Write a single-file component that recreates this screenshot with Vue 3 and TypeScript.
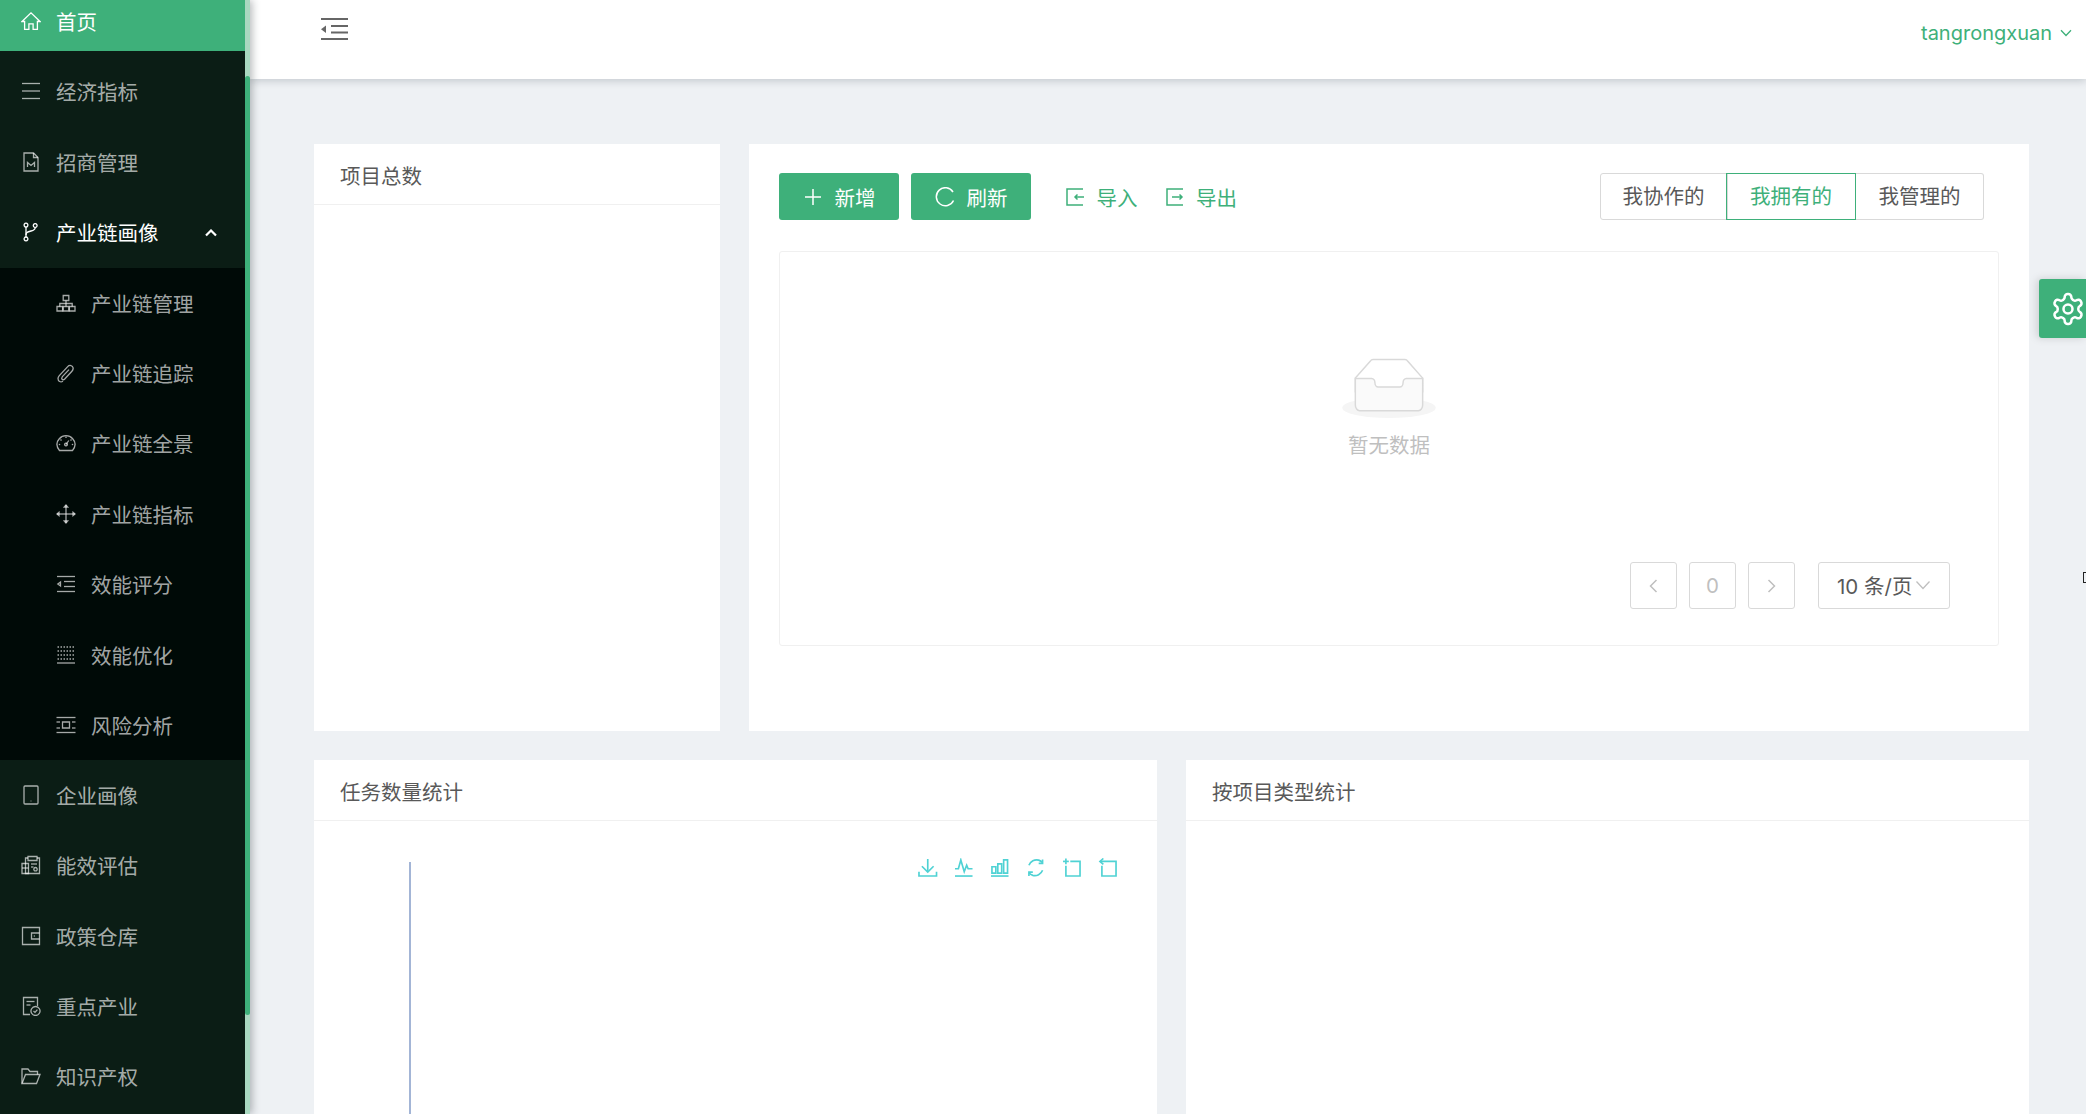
<script setup lang="ts">
type Icon = string[]

const icons: Record<string, Icon> = {
  home: ['M1 10.5 10 1.8l9 8.7h-2.6v7.8h-4.3v-5.4H7.9v5.4H3.6v-7.8z'],
  bars: ['M1 2.5h18', 'M1 10h18', 'M1 17.5h18'],
  file: ['M3 1h9.5L17 5.5V19H3z', 'M12.5 1v4.5H17', 'M6.5 15v-4.6l3.5 3 3.500-3V15'],
  branch: [
    'M5 5v10',
    'M5 13c0-2.6 1.4-3 5-4 3-.8 4.2-1.5 4.2-3.6',
    'M5 1.2a1.9 1.9 0 1 1-.01 0z',
    'M5 15a1.9 1.9 0 1 1-.01 0z',
    'M14.2 1.6a1.9 1.9 0 1 1-.01 0z',
  ],
  apartment: [
    'M7.2 2.5h5.600v5H7.200z',
    'M1 13.5h5.600v4.500H1z',
    'M7.2 13.5h5.600v4.500H7.200z',
    'M13.4 13.5H19V18h-5.600z',
    'M3.800 13.500V10.500h12.400v3',
    'M10 7.500v6',
  ],
  clip: [
    'M7 18.2c-2.4 1.4-5 .2-5-2.6 0-1 .5-2.1 1.3-3l8.4-9c1.700-1.900 5-1.300 5.400 1.200.2 1.200-.3 2.400-1.200 3.400l-7.400 8c-1.200 1.200-3.100.3-2.700-1.300.1-.5.4-1 .8-1.500l6.400-6.800',
  ],
  dashboard: [
    'M3.5 17.500h13c3.600-4.400 2.800-8.900.2-11.800C13.200 1.700 6.800 1.700 3.300 5.700.7 8.600-.1 13.100 3.500 17.500z',
    'M10 11.500l2.800-4',
    'M10 12.900a1.400 1.400 0 1 0-.01 0z',
    'M10 3.500v1.500',
    'M4.500 6.500l1 1',
    'M15.500 6.500l-1 1',
    'M2.800 11.500h1.400',
    'M15.800 11.500h1.400',
  ],
  drag: [
    'M10 1v18',
    'M1 10h18',
    'M8.300 3 10 1l1.700 2z',
    'M8.300 17 10 19l1.700-2z',
    'M3 8.300 1 10l2 1.700z',
    'M17 8.300 19 10l-2 1.700z',
  ],
  indent: ['M1 2.500h18', 'M8 7.500h11', 'M8 12.500h11', 'M1 17.500h18', 'M4.500 8v4L1.800 10z'],
  dotted: [
    'M1.500 2h17',
    'M1.500 6h17',
    'M1.500 10h17',
    'M1.500 14h17',
  ],
  pic: ['M0.500 2.500h19', 'M0.500 17.500h19', 'M0.500 7h3.500', 'M0.500 13h3.500', 'M16 7h3.500', 'M16 13h3.500', 'M6.500 7h7v6h-7z'],
  tablet: ['M4 1h12c.6 0 1 .4 1 1v16c0 .6-.4 1-1 1H4c-.6 0-1-.4-1-1V2c0-.6.4-1 1-1z', 'M9.700 16h.6'],
  recon: [
    'M7 3H4.500v15.500h14V3H16',
    'M7 1.500h9v4H7z',
    'M1 8.500h6.500v10H1z',
    'M1 13h6.500',
    'M10 9h6',
    'M10 12h2.500',
    'M14.500 12.500a1.700 1.700 0 1 0 .01 0z',
  ],
  wallet: ['M1.500 1.500h17v17h-17z', 'M18.500 7H10.500v6h8', 'M12.800 10h1'],
  filedone: [
    'M16.500 10V1.500h-14v17h6.500',
    'M5.500 5.500h8',
    'M5.500 9h4',
    'M14.500 10.500a4.500 4.500 0 1 0 .01 0z',
    'M12.500 15l1.500 1.400 2.400-2.800',
  ],
  folder: ['M1 17.500V3h6l2 2.500h7.500v3', 'M1 17.500l3.500-9H19l-3.500 9z'],
}

interface MenuItem {
  label: string
  icon: string
}

const topMenu: MenuItem[] = [
  { label: '经济指标', icon: 'bars' },
  { label: '招商管理', icon: 'file' },
]

const subMenu: MenuItem[] = [
  { label: '产业链管理', icon: 'apartment' },
  { label: '产业链追踪', icon: 'clip' },
  { label: '产业链全景', icon: 'dashboard' },
  { label: '产业链指标', icon: 'drag' },
  { label: '效能评分', icon: 'indent' },
  { label: '效能优化', icon: 'dotted' },
  { label: '风险分析', icon: 'pic' },
]

const bottomMenu: MenuItem[] = [
  { label: '企业画像', icon: 'tablet' },
  { label: '能效评估', icon: 'recon' },
  { label: '政策仓库', icon: 'wallet' },
  { label: '重点产业', icon: 'filedone' },
  { label: '知识产权', icon: 'folder' },
]

const scopes = ['我协作的', '我拥有的', '我管理的']

const chartTools: Icon[] = [
  ['M10 1v13', 'M4 8.500l6 6 6-6', 'M1 14v4.500h18V14'],
  ['M1 18.500h18', 'M1 11h3.500L7 2l3.500 12L13 7.500l1.500 3.500H19'],
  ['M1 18.500h18', 'M2 9h4v6.500H2z', 'M8 6h4v9.500H8z', 'M14 2h4v13.500h-4z'],
  [
    'M3 7.500C4.500 3.500 9 1 13 2.200c1.500.5 2.800 1.300 3.800 2.500',
    'M17 1.500v4h-4',
    'M17 12.500c-1.500 4-6 6.500-10 5.300-1.500-.5-2.800-1.300-3.800-2.500',
    'M3 18.500v-4h4',
  ],
  ['M4 0.500v6', 'M1 3.500h6', 'M8.500 3.500H18.500v15H4V8'],
  ['M5.500 0.500 2 3.500l3.500 3', 'M2 3.500h16.500v15H4V8'],
]
</script>

<template>
  <div class="page">
    <aside class="sider">
      <nav class="menu">
        <div class="item active">
          <svg class="icon" viewBox="0 0 20 20"><path v-for="d in icons.home" :key="d" :d="d" /></svg>
          <span>首页</span>
        </div>
        <div v-for="m in topMenu" :key="m.label" class="item">
          <svg class="icon" viewBox="0 0 20 20"><path v-for="d in icons[m.icon]" :key="d" :d="d" /></svg>
          <span>{{ m.label }}</span>
        </div>
        <div class="item open">
          <svg class="icon" viewBox="0 0 20 20"><path v-for="d in icons.branch" :key="d" :d="d" /></svg>
          <span>产业链画像</span>
          <svg class="caret" viewBox="0 0 12 8"><path d="M1 6.500 6 1.500l5 5" /></svg>
        </div>
        <div class="submenu">
          <div v-for="m in subMenu" :key="m.label" class="item sub">
            <svg class="icon" viewBox="0 0 20 20" :class="{ dots: m.icon === 'dotted' }">
              <path v-for="d in icons[m.icon]" :key="d" :d="d" />
              <path v-if="m.icon === 'dotted'" class="solid-line" d="M1 18h18" />
            </svg>
            <span>{{ m.label }}</span>
          </div>
        </div>
        <div v-for="m in bottomMenu" :key="m.label" class="item">
          <svg class="icon" viewBox="0 0 20 20"><path v-for="d in icons[m.icon]" :key="d" :d="d" /></svg>
          <span>{{ m.label }}</span>
        </div>
      </nav>
      <div class="scroll-track"><div class="scroll-thumb" /></div>
    </aside>

    <div class="layout">
      <header class="header">
        <svg class="collapse" viewBox="0 0 27 24">
          <path d="M0 2h27M10 9h17M10 15.500h17M0 22h27" />
          <path class="solid" d="M0 12.200l5-3.800v7.600z" />
        </svg>
        <div class="user">
          <span>tangrongxuan</span>
          <svg viewBox="0 0 12 8"><path d="M1 1.200 6 6.500l5-5.300" /></svg>
        </div>
      </header>

      <main class="content">
        <section class="row top">
          <div class="card total">
            <div class="card-title">项目总数</div>
          </div>
          <div class="card projects">
            <div class="toolbar">
              <button class="btn primary">
                <svg viewBox="0 0 20 20"><path d="M10 2v16M2 10h16" /></svg>新增
              </button>
              <button class="btn primary">
                <svg viewBox="0 0 20 20"><path d="M18 5A9 9 0 1 0 18.500 13.500" /></svg>刷新
              </button>
              <a class="link first">
                <svg viewBox="0 0 20 20"><path d="M18 2H2v16h16M19 10h-9M12.500 7.500 10 10l2.500 2.500" /></svg>导入
              </a>
              <a class="link">
                <svg viewBox="0 0 20 20"><path d="M18 2H2v16h16M7 10h10M14.500 7.500 17 10l-2.500 2.500" /></svg>导出
              </a>
              <div class="scopes">
                <span v-for="s in scopes" :key="s" class="scope" :class="{ on: s === '我拥有的' }">{{ s }}</span>
              </div>
            </div>
            <div class="list-box">
              <div class="empty">
                <svg width="94" height="60" viewBox="0 0 64 41">
                  <g transform="translate(0 1)" fill="none" fill-rule="evenodd">
                    <ellipse fill="#f5f5f5" cx="32" cy="33" rx="32" ry="7" />
                    <g fill-rule="nonzero" stroke="#d9d9d9">
                      <path d="M55 12.760L44.854 1.258C44.367.474 43.656 0 42.907 0H21.093c-.749 0-1.460.474-1.947 1.257L9 12.761V22h46v-9.240z" />
                      <path d="M41.613 15.931c0-1.605.994-2.930 2.227-2.931H55v18.137C55 33.260 53.680 35 52.050 35h-40.100C10.320 35 9 33.259 9 31.137V13h11.160c1.233 0 2.227 1.323 2.227 2.928v.022c0 1.605 1.005 2.901 2.237 2.901h14.752c1.232 0 2.237-1.308 2.237-2.913v-.007z" fill="#fafafa" />
                    </g>
                  </g>
                </svg>
                <p>暂无数据</p>
              </div>
              <div class="pager">
                <span class="page-btn"><svg viewBox="0 0 10 16"><path d="M8 2 2 8l6 6" /></svg></span>
                <span class="page-btn num">0</span>
                <span class="page-btn"><svg viewBox="0 0 10 16"><path d="M2 2l6 6-6 6" /></svg></span>
                <span class="page-size">10 条/页<svg viewBox="0 0 16 10"><path d="M1.500 1.500 8 8.500l6.500-7" /></svg></span>
              </div>
            </div>
          </div>
        </section>

        <section class="row bottom">
          <div class="card half">
            <div class="card-title">任务数量统计</div>
            <div class="chart">
              <div class="axis" />
              <div class="chart-tools">
                <svg v-for="(tool, i) in chartTools" :key="i" viewBox="0 0 20 20">
                  <path v-for="d in tool" :key="d" :d="d" />
                </svg>
              </div>
            </div>
          </div>
          <div class="card half">
            <div class="card-title">按项目类型统计</div>
          </div>
        </section>
      </main>
    </div>

    <div class="settings">
      <svg viewBox="0 0 24 24">
        <path d="M12.220 2h-.44a2 2 0 0 0-2 2v.18a2 2 0 0 1-1 1.730l-.43.25a2 2 0 0 1-2 0l-.15-.08a2 2 0 0 0-2.730.73l-.22.38a2 2 0 0 0 .73 2.730l.15.1a2 2 0 0 1 1 1.720v.51a2 2 0 0 1-1 1.740l-.15.09a2 2 0 0 0-.73 2.730l.22.38a2 2 0 0 0 2.730.73l.15-.08a2 2 0 0 1 2 0l.43.25a2 2 0 0 1 1 1.730V20a2 2 0 0 0 2 2h.44a2 2 0 0 0 2-2v-.18a2 2 0 0 1 1-1.730l.43-.25a2 2 0 0 1 2 0l.15.08a2 2 0 0 0 2.730-.73l.22-.39a2 2 0 0 0-.73-2.730l-.15-.08a2 2 0 0 1-1-1.740v-.5a2 2 0 0 1 1-1.740l.15-.09a2 2 0 0 0 .73-2.730l-.22-.38a2 2 0 0 0-2.730-.73l-.15.08a2 2 0 0 1-2 0l-.43-.25a2 2 0 0 1-1-1.730V4a2 2 0 0 0-2-2z" />
        <circle cx="12" cy="12" r="3" />
      </svg>
    </div>
    <div class="cursor-mark" />
  </div>
</template>

<style>
html,
body {
  margin: 0;
  background: #eef1f4;
}
</style>

<style scoped>
.page {
  position: relative;
  display: flex;
  width: 2086px;
  height: 1114px;
  overflow: hidden;
  background: #eef1f4;
  font-family: Inter, "Noto Sans CJK SC", sans-serif;
  font-size: 20.5px;
  color: #595959;
}

.sider {
  position: relative;
  z-index: 2;
  display: flex;
  flex: none;
  width: 250px;
  background: #0b1d15;
  box-shadow: 2px 0 8px rgba(29, 35, 41, 0.32);
}

.menu {
  flex: none;
  width: 245px;
  margin-top: -8.500px;
}

.item {
  display: flex;
  align-items: center;
  gap: 15px;
  height: 59px;
  margin-bottom: 11.400px;
  padding-left: 21px;
  color: rgba(255, 255, 255, 0.65);
}

.item .icon {
  flex: none;
  width: 20px;
  height: 20px;
  fill: none;
  stroke: currentColor;
  stroke-width: 1.300;
}

.item .icon.dots {
  stroke-dasharray: 1.500 1.500;
}

.item .icon .solid-line {
  stroke-dasharray: none;
}

.item.active {
  background: #3eb07a;
  color: #fff;
}

.item.open {
  position: relative;
  margin-bottom: 6px;
  color: #fff;
}

.caret {
  position: absolute;
  top: 26px;
  right: 28px;
  width: 12px;
  height: 8px;
  fill: none;
  stroke: #fff;
  stroke-width: 2.200;
}

.submenu {
  margin-bottom: 5px;
  padding: 5.400px 0 6px;
  background: #000a07;
}

.item.sub {
  padding-left: 56px;
}

.item.sub:last-child {
  margin-bottom: 0;
}

.scroll-track {
  flex: none;
  width: 5px;
  background: #a9d8c0;
}

.scroll-thumb {
  height: 939px;
  margin-top: 76px;
  border-radius: 3px;
  background: #3eb07a;
}

.layout {
  display: flex;
  flex: 1;
  flex-direction: column;
  min-width: 0;
}

.header {
  z-index: 1;
  display: flex;
  flex: none;
  align-items: flex-start;
  justify-content: space-between;
  height: 79px;
  padding: 17px 14px 0 71px;
  box-sizing: border-box;
  background: #fff;
  box-shadow: 0 2px 8px rgba(0, 21, 41, 0.18);
}

.collapse {
  width: 27px;
  height: 24px;
  fill: none;
  stroke: #666;
  stroke-width: 2;
}

.collapse .solid {
  fill: #666;
  stroke: none;
}

.user {
  display: flex;
  align-items: center;
  gap: 8px;
  height: 32px;
  font-size: 20px;
  color: #3eb07a;
}

.user svg {
  width: 12px;
  height: 8px;
  fill: none;
  stroke: #3eb07a;
  stroke-width: 1.300;
}

.content {
  display: flex;
  flex: 1;
  flex-direction: column;
  gap: 29.500px;
  padding: 65px 57px 0 64px;
  min-height: 0;
}

.row {
  display: flex;
  flex: none;
  gap: 29px;
}

.row.top {
  height: 586.500px;
}

.row.bottom {
  height: 400px;
}

.card {
  background: #fff;
}

.total {
  flex: none;
  width: 406px;
}

.projects {
  flex: 1;
  padding: 29px 30px 0;
}

.half {
  flex: 1;
}

.card-title {
  box-sizing: border-box;
  height: 61px;
  padding: 3px 26px 0;
  border-bottom: 1px solid #f0f0f0;
  line-height: 60px;
  color: #595959;
}

.toolbar {
  display: flex;
  align-items: center;
  height: 47px;
}

.btn {
  display: flex;
  align-items: center;
  justify-content: center;
  gap: 12px;
  width: 120px;
  height: 47px;
  margin-right: 12px;
  padding: 0;
  border: 0;
  border-radius: 3px;
  background: #3eb07a;
  color: #fff;
  font: inherit;
}

.btn svg {
  width: 20px;
  height: 20px;
  fill: none;
  stroke: #fff;
  stroke-width: 1.500;
}

.link {
  display: flex;
  align-items: center;
  gap: 11.500px;
  margin-right: 27px;
  color: #3eb07a;
}

.link.first {
  margin-left: 22px;
}

.link svg {
  width: 20px;
  height: 20px;
  fill: none;
  stroke: #3eb07a;
  stroke-width: 1.500;
}

.scopes {
  display: flex;
  margin-left: auto;
  margin-right: 15px;
}

.scope {
  box-sizing: border-box;
  width: 128px;
  height: 47px;
  border: 1.500px solid #d9d9d9;
  border-left-width: 0;
  line-height: 46px;
  text-align: center;
}

.scope:first-child {
  border-left-width: 1.500px;
  border-radius: 3px 0 0 3px;
}

.scope:last-child {
  border-radius: 0 3px 3px 0;
}

.scope.on {
  width: 130px;
  margin-left: -1.500px;
  border: 1.500px solid #3eb07a;
  color: #3eb07a;
}

.list-box {
  display: flex;
  flex-direction: column;
  box-sizing: border-box;
  height: 395px;
  margin-top: 31px;
  border: 1.500px solid #f0f0f0;
  border-radius: 3px;
}

.empty {
  display: flex;
  flex-direction: column;
  align-items: center;
  padding-top: 106px;
}

.empty p {
  margin: 13px 0 0;
  color: #bfbfbf;
  line-height: 30px;
}

.pager {
  display: flex;
  align-items: center;
  gap: 12px;
  margin-top: 101px;
  padding-left: 850px;
}

.page-btn {
  display: flex;
  align-items: center;
  justify-content: center;
  box-sizing: border-box;
  width: 47px;
  height: 47px;
  border: 1.500px solid #d9d9d9;
  border-radius: 3px;
  color: #bfbfbf;
}

.page-btn svg {
  width: 11px;
  height: 16px;
  fill: none;
  stroke: #bfbfbf;
  stroke-width: 1.500;
}

.page-size {
  display: flex;
  align-items: center;
  box-sizing: border-box;
  width: 132px;
  height: 47px;
  margin-left: 11px;
  padding: 0 0 2px 18px;
  border: 1.500px solid #d9d9d9;
  border-radius: 3px;
  white-space: nowrap;
}

.page-size svg {
  flex: none;
  width: 16px;
  height: 10px;
  margin-left: 3px;
  fill: none;
  stroke: #bfbfbf;
  stroke-width: 1.300;
}

.chart {
  position: relative;
  height: 339px;
}

.axis {
  position: absolute;
  top: 41px;
  bottom: 0;
  left: 95px;
  width: 2px;
  background: #a3b5d6;
}

.chart-tools {
  position: absolute;
  top: 37px;
  left: 604px;
  display: flex;
  gap: 16.500px;
}

.chart-tools svg {
  width: 19.500px;
  height: 19.500px;
  fill: none;
  stroke: #4fd2d4;
  stroke-width: 1.700;
}

.settings {
  position: absolute;
  top: 279px;
  right: 0;
  z-index: 3;
  display: flex;
  align-items: center;
  justify-content: flex-start;
  box-sizing: border-box;
  width: 47px;
  height: 59px;
  padding-left: 11px;
  border-radius: 3px 0 0 3px;
  background: #3eb07a;
  box-shadow: -2px 0 8px rgba(0, 0, 0, 0.15);
}

.settings svg {
  flex: none;
  width: 36px;
  height: 36px;
  fill: none;
  stroke: #fff;
  stroke-width: 1.700;
}

.cursor-mark {
  position: absolute;
  top: 572px;
  right: 0;
  width: 2px;
  height: 9px;
  border: 1px solid #222;
  border-right: 0;
}
</style>
